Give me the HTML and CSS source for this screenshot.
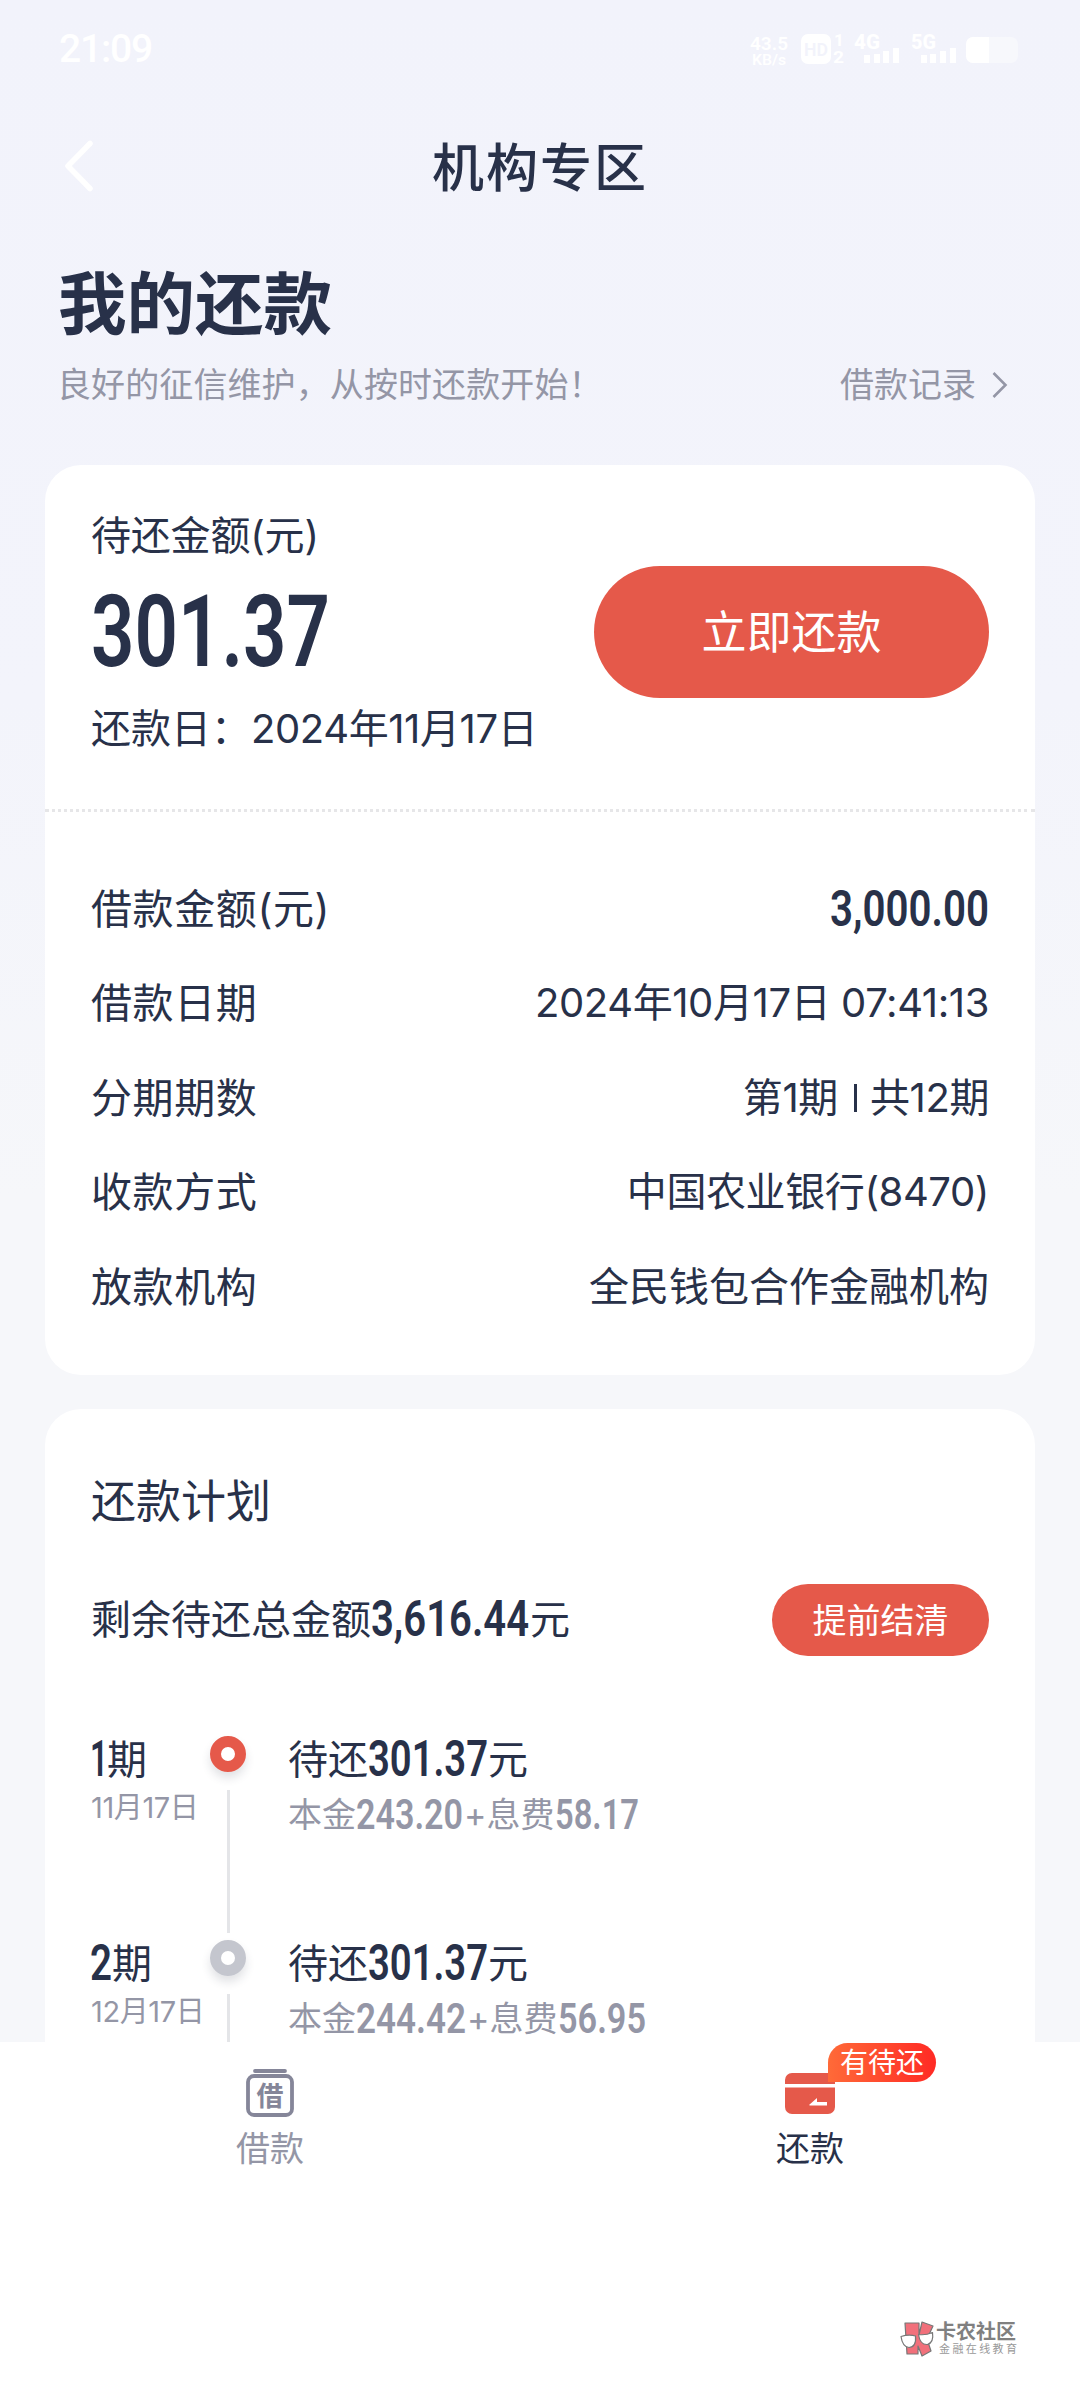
FILE: index.html
```html
<!DOCTYPE html>
<html lang="zh-CN">
<head>
<meta charset="utf-8">
<title>机构专区</title>
<link rel="stylesheet" href="styles.css">
</head>
<body>
<main class="screen">
  <div class="status">
    <span class="clock">21:09</span>
    <svg class="status-icons" width="270" height="32" viewBox="749 33 270 32" fill="#fff">
      <text x="750" y="49.500" font-size="19" font-weight="600" textLength="38" lengthAdjust="spacingAndGlyphs">43.5</text>
      <text x="752" y="65" font-size="15" font-weight="600" textLength="34" lengthAdjust="spacingAndGlyphs">KB/s</text>
      <rect x="801" y="34" width="30" height="30" rx="7"/>
      <text class="hd" x="804" y="56" font-size="18" font-weight="600" textLength="24" lengthAdjust="spacingAndGlyphs">HD</text>
      <text x="834" y="46" font-size="17" font-weight="700">1</text>
      <text x="833" y="63" font-size="17" font-weight="700" textLength="11" lengthAdjust="spacingAndGlyphs">2</text>
      <text x="854" y="48.500" font-size="20" font-weight="800" textLength="26" lengthAdjust="spacingAndGlyphs">4G</text>
      <path d="M864 55h6v8h-6zM874 54h6v9h-6zM883 51h6v12h-6zM893 48h6v15h-6z"/>
      <text x="911" y="48.500" font-size="20" font-weight="800" textLength="25" lengthAdjust="spacingAndGlyphs">5G</text>
      <path d="M921 55h6v8h-6zM930 54h6v9h-6zM940 51h6v12h-6zM950 48h6v15h-6z"/>
      <rect x="966" y="37" width="52" height="26" rx="7" opacity=".4"/>
      <path d="M973 37h16v26h-16a7 7 0 0 1-7-7v-12a7 7 0 0 1 7-7z"/>
    </svg>
  </div>

  <header class="nav">
    <svg class="back" width="32" height="54" viewBox="0 0 32 54" fill="none" stroke="#fff" stroke-width="5.500" stroke-linecap="round" stroke-linejoin="round"><path d="M27 4.500 5 27l22 22.500"/></svg>
    <h1>机构专区</h1>
  </header>

  <section class="intro">
    <h2>我的还款</h2>
    <div class="intro-line">
      <p>良好的征信维护，从按时还款开始！</p>
      <a class="record">借款记录<svg width="16" height="28" viewBox="0 0 16 28" fill="none" stroke="#9496a6" stroke-width="2.600"><path d="M1.500 2 13.500 14 1.500 26"/></svg></a>
    </div>
  </section>

  <section class="card">
    <div class="due">
      <div>
        <p class="due-text">待还金额(元)</p>
        <svg class="num due-num" width="239" height="72"><text y="72" font-size="101" textLength="239" lengthAdjust="spacingAndGlyphs">301.37</text></svg>
        <p class="due-text due-date">还款日：<span class="date">2024年11月17日</span></p>
      </div>
      <button class="pay">立即还款</button>
    </div>
    <dl class="details">
      <div><dt>借款金额(元)</dt><dd><svg class="num" width="159" height="36"><text y="35" font-size="50" textLength="159" lengthAdjust="spacingAndGlyphs">3,000.00</text></svg></dd></div>
      <div><dt>借款日期</dt><dd class="date">2024年10月17日 07:41:13</dd></div>
      <div><dt>分期期数</dt><dd class="date">第1期<i class="bar"></i>共12期</dd></div>
      <div><dt>收款方式</dt><dd class="date">中国农业银行(8470)</dd></div>
      <div><dt>放款机构</dt><dd>全民钱包合作金融机构</dd></div>
    </dl>
  </section>

  <section class="card plan">
    <h3>还款计划</h3>
    <div class="total">
      <p class="main">剩余待还总金额<svg class="num" width="159" height="36"><text y="36" font-size="50" textLength="158" lengthAdjust="spacingAndGlyphs">3,616.44</text></svg>元</p>
      <button class="settle">提前结清</button>
    </div>
    <ol class="terms">
      <li>
        <div class="when">
          <p class="main"><svg class="num" width="16" height="36"><text x="-1" y="36" font-size="50" textLength="18" lengthAdjust="spacingAndGlyphs">1</text></svg>期</p>
          <p class="day">11月17日</p>
        </div>
        <div class="track"><i class="dot dot-now"></i><i class="line"></i></div>
        <div>
          <p class="main">待还<svg class="num" width="120" height="36"><text y="36" font-size="50" textLength="120" lengthAdjust="spacingAndGlyphs">301.37</text></svg>元</p>
          <p class="sub">本金<svg class="num" width="108" height="30"><text y="30" font-size="42" textLength="107" lengthAdjust="spacingAndGlyphs">243.20</text></svg><span class="plus">+</span>息费<svg class="num" width="85" height="30"><text y="30" font-size="42" textLength="84" lengthAdjust="spacingAndGlyphs">58.17</text></svg></p>
        </div>
      </li>
      <li>
        <div class="when">
          <p class="main"><svg class="num" width="21" height="36"><text x="-1" y="36" font-size="50" textLength="22" lengthAdjust="spacingAndGlyphs">2</text></svg>期</p>
          <p class="day">12月17日</p>
        </div>
        <div class="track"><i class="dot"></i><i class="line"></i></div>
        <div>
          <p class="main">待还<svg class="num" width="120" height="36"><text y="36" font-size="50" textLength="120" lengthAdjust="spacingAndGlyphs">301.37</text></svg>元</p>
          <p class="sub">本金<svg class="num" width="111" height="30"><text y="30" font-size="42" textLength="110" lengthAdjust="spacingAndGlyphs">244.42</text></svg><span class="plus">+</span>息费<svg class="num" width="89" height="30"><text y="30" font-size="42" textLength="88" lengthAdjust="spacingAndGlyphs">56.95</text></svg></p>
        </div>
      </li>
    </ol>
  </section>
</main>

<nav class="tabs">
  <a class="tab">
    <span class="icon">
      <svg width="48" height="50" viewBox="0 0 48 50" fill="none" stroke="#858699" stroke-width="3.800" stroke-linecap="round"><path d="M9 3h30"/><rect x="2" y="8" width="44" height="39" rx="6"/><text x="10.500" y="37.500" font-size="27" font-weight="700" fill="#858699" stroke="none">借</text></svg>
    </span>
    <span>借款</span>
  </a>
  <a class="tab tab-on">
    <span class="icon">
      <svg width="50" height="50" viewBox="0 0 50 50" fill="#e5594a"><path d="M7 5h36a7 7 0 0 1 7 7v4H0v-4a7 7 0 0 1 7-7zM0 19.500h50V39a7 7 0 0 1-7 7H7a7 7 0 0 1-7-7z"/><path fill="#fff" d="M24 37 32 30v4h10v3.500H25z"/></svg>
      <span class="badge">有待还</span>
    </span>
    <span>还款</span>
  </a>
</nav>

<footer class="brand">
  <svg width="35" height="37" viewBox="0 0 35 37" stroke="#777" stroke-width="1.200" stroke-linejoin="round"><path fill="#f1707b" d="M5 2h14v12l3-13 11 4-6 13 4 12-9 5-4-10v8H7z"/><path fill="#fff" d="M1 15.500q8-2.500 14.500-.5 1 11-6.500 11.500-6.500-.5-8-11zM18.500 13.500q7 1 14-2 1.500 10-5 12-7.500.5-9-10z"/></svg>
  <div>
    <p class="brand-name">卡农社区</p>
    <p class="brand-sub">金融在线教育</p>
  </div>
</footer>
</body>
</html>
```
FILE: styles.css
```css
* { box-sizing: border-box; margin: 0; padding: 0; }

body {
  width: 1080px;
  height: 2408px;
  overflow: hidden;
  background: #fff;
  color: #283149;
  font-family: Inter, "Noto Sans CJK SC", sans-serif;
  font-size: 40px;
}

i { display: block; }
button { border: 0; color: #fff; background: #e5594a; font-family: inherit; }
svg { display: block; overflow: visible; }

.screen {
  height: 2042px;
  overflow: hidden;
  background: linear-gradient(#f2f3fb 0, #f3f4fb 700px, #f6f7fa 1200px);
}

.status {
  display: flex;
  justify-content: space-between;
  height: 98px;
  padding: 33px 61px 0 59px;
  color: #fff;
}
.clock { font: 500 39px/33px Roboto, sans-serif; letter-spacing: -1.200px; }
.status-icons { font-family: Roboto, sans-serif; }
.hd { fill: #f2f3fb; }

.nav { display: grid; grid-template-columns: 64px 1fr 64px; align-items: center; height: 138px; }
.back { margin-left: 63px; margin-top: -3px; }
.nav h1 { padding-top: 3px; text-align: center; font-size: 52px; font-weight: 500; line-height: 60px; letter-spacing: 2px; }

.intro { height: 229px; padding: 29px 72px 0 58px; }
.intro h2 { font-size: 68.500px; font-weight: 700; line-height: 80px; }
.intro-line { display: flex; justify-content: space-between; margin-top: 16px; color: #9496a6; font-size: 34px; line-height: 48px; }
.intro-line p { margin-left: -1px; letter-spacing: .1px; }
.record { display: flex; align-items: center; gap: 16px; }

.card { width: 990px; margin: 0 auto; border-radius: 36px; background: #fff; }

.due { display: flex; justify-content: space-between; align-items: flex-start; height: 347px; padding: 41px 46px 0; border-bottom: 3px dotted #e6e6e8; }
.due-text { line-height: 60px; }
.due > div > .due-text:first-child { letter-spacing: -.2px; }
.due-num { margin-top: 28px; }
.due-date { margin-top: 33px; }
.date { letter-spacing: -.4px; }
.pay { width: 395px; height: 132px; margin-top: 60px; padding-bottom: 5px; border-radius: 66px; font-size: 45px; }

.num { display: inline-block; vertical-align: -2px; font-family: Roboto, sans-serif; font-weight: 600; fill: currentColor; }
.due .num { display: block; }

.details { padding: 50px 46px 41px; }
.details div { display: flex; justify-content: space-between; height: 94.400px; line-height: 94.400px; }
.details dt { font-size: 41px; letter-spacing: .6px; }
.details dd { display: flex; align-items: center; }
.bar { width: 3px; height: 28px; margin: 0 13px 0 16px; background: #283149; }

.plan { margin-top: 34px; padding: 58px 46px 0; height: 900px; }
.plan h3 { font-size: 45px; font-weight: 400; line-height: 70px; }
.total { display: flex; justify-content: space-between; align-items: center; height: 72px; margin-top: 47px; }
.settle { width: 217px; height: 72px; padding-bottom: 3px; border-radius: 36px; font-size: 34px; }

.terms { margin-top: 78px; list-style: none; }
.terms li { display: grid; grid-template-columns: 111px 52px 1fr; height: 204px; }
.terms li > :last-child { padding-left: 34px; }
.main { line-height: 52px; white-space: nowrap; }
.day { margin-top: 6px; color: #9496a6; font-size: 29px; line-height: 32px; letter-spacing: -.4px; white-space: nowrap; }
.sub { margin-top: 4px; color: #9496a6; font-size: 34px; line-height: 50px; white-space: nowrap; }
.track { display: flex; flex-direction: column; align-items: center; padding-top: 2px; }
.dot { width: 36px; height: 36px; border: 11px solid #c4c6ce; border-radius: 50%; box-shadow: 0 6px 10px rgba(40, 49, 73, .14); }
.dot-now { border-color: #e5594a; }
.line { width: 3px; height: 143px; margin-top: 18px; background: #e4e5e8; }

.tabs { display: flex; height: 240px; background: #fff; }
.tab { display: flex; flex: 1; flex-direction: column; align-items: center; padding-top: 26px; color: #9496a6; font-size: 34px; line-height: 48px; }
.tab-on { color: #283149; }
.icon { position: relative; height: 57px; }
.badge {
  position: absolute;
  left: 43px;
  top: -25px;
  width: 108px;
  height: 39px;
  border-radius: 20px 20px 20px 0;
  background: linear-gradient(90deg, #ff6a38, #ff2a24);
  color: #fff;
  font-size: 28px;
  line-height: 41px;
  text-align: center;
}

.brand { display: flex; gap: 1px; margin-left: 900px; padding-top: 39px; }
.brand-name { color: #808080; font-size: 20px; font-weight: 700; line-height: 22px; }
.brand-sub { margin-left: 3px; color: #999; font-size: 11px; line-height: 12px; letter-spacing: 2.400px; white-space: nowrap; }
```
